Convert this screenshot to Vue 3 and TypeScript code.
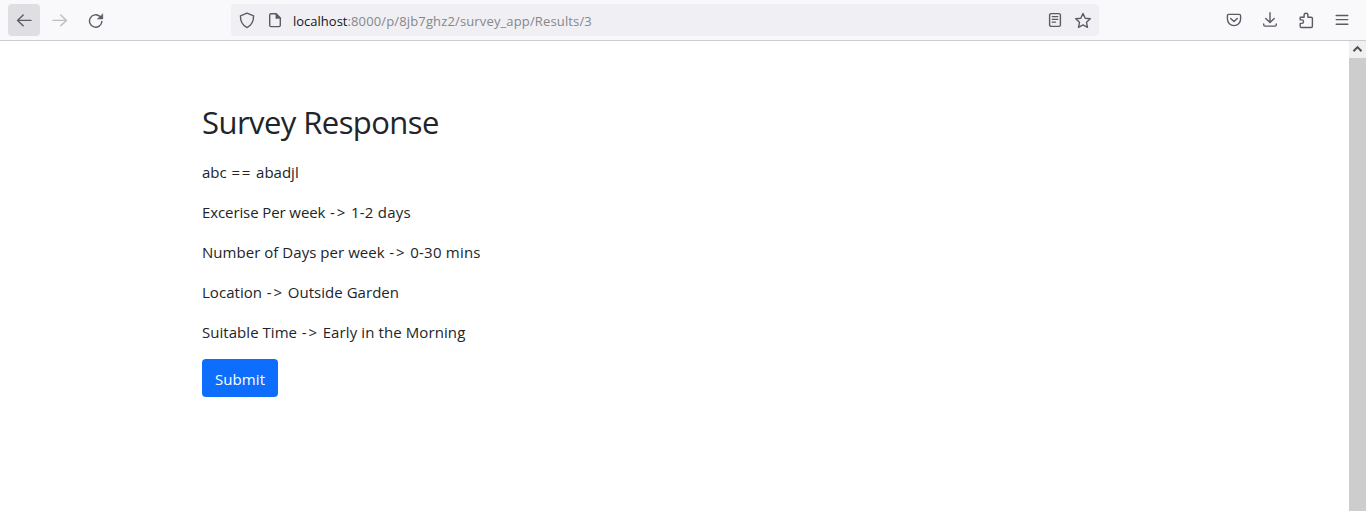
<script setup lang="ts">
interface Row {
  label: string
  operator: string
  answer: string
  labelTracking: number
  answerTracking: number
}

const rows: Row[] = [
  { label: 'abc', operator: '==', answer: 'abadjl', labelTracking: 0, answerTracking: 0 },
  { label: 'Excerise Per week', operator: '->', answer: '1-2 days', labelTracking: -0.1, answerTracking: 0.25 },
  { label: 'Number of Days per week', operator: '->', answer: '0-30 mins', labelTracking: 0.04, answerTracking: 0.22 },
  { label: 'Location', operator: '->', answer: 'Outside Garden', labelTracking: 0.04, answerTracking: 0.04 },
  { label: 'Suitable Time', operator: '->', answer: 'Early in the Morning', labelTracking: 0.04, answerTracking: 0.1 },
]
</script>

<template>
  <div class="window">
    <header class="toolbar">
      <div class="nav">
        <span class="tool active">
          <svg width="16" height="16" viewBox="0 0 16 16"><path d="M15 8.4H1.5M7.2 2.9L1.5 8.4l5.7 5.4" /></svg>
        </span>
        <span class="tool disabled">
          <svg width="16" height="16" viewBox="0 0 16 16"><path d="M1 8.4h13.5M8.8 2.9l5.7 5.5-5.7 5.4" /></svg>
        </span>
        <span class="tool">
          <svg width="16" height="16" viewBox="0 0 16 16"><path d="M12 4.5A6.2 6.2 0 1 0 13.9 9.4" /><path class="solid" d="M14.8 2v5H9.6z" /></svg>
        </span>
      </div>
      <div class="address">
        <svg width="16" height="17" viewBox="0 0 16 17"><path d="M8 1.2L14.6 3.8C14.6 9.6 12.6 13.4 8 15.6 3.4 13.4 1.4 9.6 1.4 3.8z" /></svg>
        <svg class="page" width="14" height="16" viewBox="0 0 14 16"><path d="M8.2 1.8H3Q1.7 1.8 1.7 3.1v10.2Q1.7 14.6 3 14.6h8Q12.3 14.6 12.3 13.3V5.9z" /><path class="solid" d="M7.8 1.6v4.8h4.8z" /></svg>
        <span class="url"><span class="host">localhost</span>:8000/p/8jb7ghz2/survey_app/Results/3</span>
        <svg width="14" height="16" viewBox="0 0 14 16"><rect x="1.6" y="1.6" width="10.8" height="12.8" rx="1.6" /><path class="fine" d="M4.2 4.6h5.6M4.2 7.4h5.6M4.2 10.2h3.4" /></svg>
        <svg class="star" width="18" height="17" viewBox="0 0 18 17"><path d="M9 1.5l2.2 4.7 5.1.6-3.8 3.5 1 5L9 12.9l-4.5 2.4 1-5L1.7 6.8l5.1-.6z" /></svg>
      </div>
      <div class="actions">
        <svg width="16" height="16" viewBox="0 0 16 16"><path d="M2.8 2.4h10.4Q14.6 2.4 14.6 3.8v3.2a6.6 6.6 0 0 1-13.2 0V3.8Q1.4 2.4 2.8 2.4z" /><path d="M4.7 6.4L8 9.4l3.3-3" /></svg>
        <svg width="16" height="16" viewBox="0 0 16 16"><path d="M8 .8v9.6M3.8 6.4L8 10.5l4.2-4.1M1.7 12v.8q0 1.3 1.4 1.3h9.8q1.4 0 1.4-1.3V12" /></svg>
        <svg width="16" height="17" viewBox="0 0 16 17"><path d="M2.2 5.2h3.9V3.1a1.9 1.9 0 0 1 3.8 0v2.1h3.2q1.3 0 1.3 1.3v7.7q0 1.3-1.3 1.3H3.4q-1.2 0-1.2-1.3v-2.8h1.6a1.75 1.75 0 0 0 0-3.5H2.2z" /></svg>
        <svg width="16" height="16" viewBox="0 0 16 16"><path d="M2.2 3.5h11.6M2.2 7.6h11.6M2.2 12.3h11.6" /></svg>
      </div>
    </header>
    <div class="viewport">
      <main class="content">
        <h2>Survey Response</h2>
        <p v-for="row in rows" :key="row.label">
          <span :style="{ letterSpacing: row.labelTracking + 'px' }">{{ row.label }}</span>
          {{ ' ' }}<span class="operator">{{ row.operator }}</span>{{ ' ' }}
          <span :style="{ letterSpacing: row.answerTracking + 'px' }">{{ row.answer }}</span>
        </p>
        <button type="button">Submit</button>
      </main>
      <div class="scrollbar">
        <div class="up">
          <svg width="11" height="9" viewBox="0 0 11 9"><path d="M1.5 6.3L5.5 2.1l4 4.2" /></svg>
        </div>
        <div class="thumb"></div>
      </div>
    </div>
  </div>
</template>

<style>
body {
  margin: 0;
  overflow: hidden;
}
</style>

<style scoped>
.window {
  display: flex;
  flex-direction: column;
  height: 511px;
  background: #fff;
  font-family: "Open Sans", "Noto Sans", sans-serif;
  color: #212529;
}
.toolbar {
  box-sizing: border-box;
  display: flex;
  height: 41px;
  padding-top: 4px;
  background: #f9f9fb;
  border-bottom: 1px solid #ccc;
}
svg {
  display: block;
  flex: none;
  fill: none;
  stroke: #5b5b66;
  stroke-width: 1.4;
  stroke-linecap: round;
  stroke-linejoin: round;
}
svg .solid {
  fill: #5b5b66;
  stroke-width: 0.5;
}
svg .fine {
  stroke-width: 1.2;
}
.nav {
  display: flex;
  gap: 4px;
  width: 223px;
  padding-left: 8px;
}
.tool {
  display: flex;
  align-items: center;
  justify-content: center;
  width: 32px;
  height: 32px;
  border-radius: 4px;
}
.active {
  background: #dedee3;
}
.disabled svg {
  stroke: #bcbcc2;
}
.address {
  box-sizing: border-box;
  display: flex;
  align-items: center;
  width: 868px;
  height: 32px;
  padding: 0 7px 0 8px;
  border-radius: 4px;
  background: #f0f0f4;
}
.page {
  margin-left: 13px;
}
.url {
  flex: 1;
  margin: 1px 0 0 11px;
  font-size: 13px;
  line-height: 20px;
  letter-spacing: 0.14px;
  white-space: nowrap;
  color: #86868c;
}
.host {
  letter-spacing: 0;
  color: #15141a;
}
.star {
  margin-left: 12px;
}
.actions {
  display: flex;
  gap: 20px;
  align-items: center;
  height: 32px;
  margin-left: 127px;
}
.viewport {
  display: flex;
  flex: 1;
  justify-content: space-between;
}
.content {
  padding: 62px 0 0 202px;
}
h2 {
  margin: 0 0 18px;
  font-size: 31px;
  line-height: 39px;
  font-weight: 400;
  letter-spacing: -0.56px;
}
p {
  margin: 0 0 16px;
  font-size: 15px;
  line-height: 24px;
  white-space: nowrap;
}
.operator {
  margin-left: 0.8px;
  letter-spacing: 1.8px;
}
button {
  display: block;
  width: 76px;
  height: 38px;
  margin-top: -1px;
  padding: 2px 0 1px;
  border: 0;
  border-radius: 4px;
  background: #0d6efd;
  color: #fff;
  font: inherit;
  font-size: 15px;
  line-height: 24px;
  letter-spacing: 0.1px;
}
.scrollbar {
  display: flex;
  flex-direction: column;
  width: 17px;
  background: #f0f0f0;
}
.up {
  display: flex;
  align-items: center;
  justify-content: center;
  height: 17px;
}
.up svg {
  stroke: #505050;
  stroke-width: 2;
  stroke-linecap: butt;
  stroke-linejoin: miter;
}
.thumb {
  flex: 1;
  background: #cdcdcd;
}
</style>
